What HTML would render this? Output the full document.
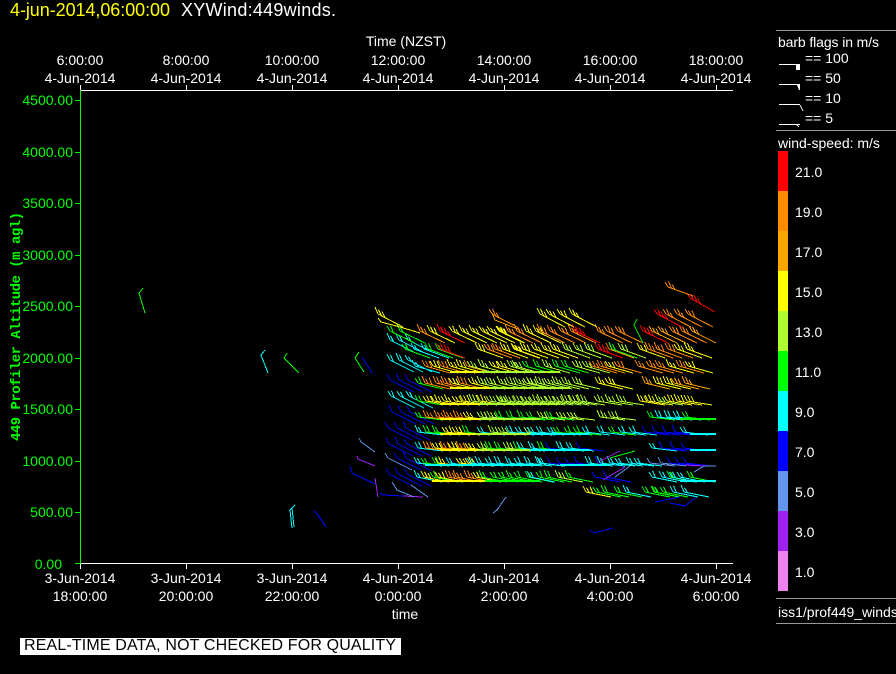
<!DOCTYPE html>
<html>
<head>
<meta charset="utf-8">
<style>
html,body{margin:0;padding:0;background:#000;width:896px;height:674px;overflow:hidden}
svg{display:block}
text{font-family:"Liberation Sans",sans-serif;font-size:14px;fill:#fff}
.g text,text.g{fill:#0f0}
</style>
</head>
<body>
<svg id="s" width="896" height="674" viewBox="0 0 896 674" xmlns="http://www.w3.org/2000/svg">
<rect width="896" height="674" fill="#000"/>
<text x="10" y="16" style="font-size:18px;fill:#ff0" textLength="160">4-jun-2014,06:00:00</text>
<text x="181" y="16" style="font-size:18px" textLength="155">XYWind:449winds.</text>

<text x="406" y="46" text-anchor="middle">Time (NZST)</text>
<g text-anchor="middle">
<text x="80" y="65">6:00:00</text><text x="80" y="83">4-Jun-2014</text>
<text x="186" y="65">8:00:00</text><text x="186" y="83">4-Jun-2014</text>
<text x="292" y="65">10:00:00</text><text x="292" y="83">4-Jun-2014</text>
<text x="398" y="65">12:00:00</text><text x="398" y="83">4-Jun-2014</text>
<text x="504" y="65">14:00:00</text><text x="504" y="83">4-Jun-2014</text>
<text x="610" y="65">16:00:00</text><text x="610" y="83">4-Jun-2014</text>
<text x="716" y="65">18:00:00</text><text x="716" y="83">4-Jun-2014</text>
<text x="80" y="583">3-Jun-2014</text><text x="80" y="601">18:00:00</text>
<text x="186" y="583">3-Jun-2014</text><text x="186" y="601">20:00:00</text>
<text x="292" y="583">3-Jun-2014</text><text x="292" y="601">22:00:00</text>
<text x="398" y="583">4-Jun-2014</text><text x="398" y="601">0:00:00</text>
<text x="504" y="583">4-Jun-2014</text><text x="504" y="601">2:00:00</text>
<text x="610" y="583">4-Jun-2014</text><text x="610" y="601">4:00:00</text>
<text x="716" y="583">4-Jun-2014</text><text x="716" y="601">6:00:00</text>
<text x="405" y="619">time</text>
</g>

<g shape-rendering="crispEdges" stroke="#fff" fill="none">
<path d="M80 90.5H733M80 563.5H733"/>
<path d="M80.5 85V90M186.5 85V90M292.5 85V90M398.5 85V90M504.5 85V90M610.5 85V90M716.5 85V90"/>
<path d="M80.5 564V569M186.5 564V569M292.5 564V569M398.5 564V569M504.5 564V569M610.5 564V569M716.5 564V569"/>
</g>
<g shape-rendering="crispEdges" stroke="#0f0" fill="none">
<path d="M80.5 90V564"/>
<path d="M75 100.5H80M75 152.5H80M75 203.5H80M75 255.5H80M75 306.5H80M75 358.5H80M75 409.5H80M75 461.5H80M75 512.5H80M75 563.5H80"/>
</g>
<g class="g" text-anchor="end">
<text x="73" y="105">4500.00</text>
<text x="73" y="157">4000.00</text>
<text x="73" y="208">3500.00</text>
<text x="73" y="260">3000.00</text>
<text x="73" y="311">2500.00</text>
<text x="73" y="363">2000.00</text>
<text x="73" y="414">1500.00</text>
<text x="73" y="466">1000.00</text>
<text x="73" y="517">500.00</text>
<text x="62" y="569">0.00</text>
</g>
<text class="g" transform="translate(20,441) rotate(-90)" style="font-family:'Liberation Mono',monospace;font-size:14px;font-weight:bold" textLength="229">449 Profiler Altitude (m agl)</text>

<g id="b" shape-rendering="crispEdges" fill="none" stroke-width="1"></g>

<!-- legend -->
<g shape-rendering="crispEdges" stroke="#999" fill="none">
<path d="M776 30.5H896M776 130.5H896M776 598.5H896M776 623.5H896"/>
</g>
<text x="778" y="47" textLength="101">barb flags in m/s</text>
<text x="805" y="63">== 100</text>
<text x="805" y="83">== 50</text>
<text x="805" y="103">== 10</text>
<text x="805" y="123">== 5</text>
<g shape-rendering="crispEdges" stroke="#fff" fill="none">
<path d="M779 64.5H800M779 84.5H800M779 104.5H800M779 124.5H800"/>
<path d="M800 105L803 111M797 125L799 127"/>
</g>
<g fill="#fff" shape-rendering="crispEdges"><rect x="796" y="64" width="4" height="6"/><path d="M797 85H800V90H799Z"/></g>
<text x="778" y="148">wind-speed: m/s</text>
<g shape-rendering="crispEdges">
<rect x="778" y="151" width="10" height="40" fill="#f00"/>
<rect x="778" y="191" width="10" height="40" fill="#ff8c00"/>
<rect x="778" y="231" width="10" height="40" fill="#ffa500"/>
<rect x="778" y="271" width="10" height="40" fill="#ff0"/>
<rect x="778" y="311" width="10" height="40" fill="#adff2f"/>
<rect x="778" y="351" width="10" height="40" fill="#0f0"/>
<rect x="778" y="391" width="10" height="40" fill="#0ff"/>
<rect x="778" y="431" width="10" height="40" fill="#00f"/>
<rect x="778" y="471" width="10" height="40" fill="#6495ed"/>
<rect x="778" y="511" width="10" height="40" fill="#a020f0"/>
<rect x="778" y="551" width="10" height="40" fill="#ee82ee"/>
</g>
<text x="795" y="177">21.0</text>
<text x="795" y="217">19.0</text>
<text x="795" y="257">17.0</text>
<text x="795" y="297">15.0</text>
<text x="795" y="337">13.0</text>
<text x="795" y="377">11.0</text>
<text x="795" y="417">9.0</text>
<text x="795" y="457">7.0</text>
<text x="795" y="497">5.0</text>
<text x="795" y="537">3.0</text>
<text x="795" y="577">1.0</text>
<text x="778" y="617">iss1/prof449_winds</text>

<!-- banner -->
<rect x="20" y="638" width="381" height="17" fill="#fff" shape-rendering="crispEdges"/>
<svg x="20" y="638" width="381" height="17" viewBox="20 638 381 17">
<text x="24" y="650" style="font-size:16px;fill:#000" textLength="372">REAL-TIME DATA, NOT CHECKED FOR QUALITY</text>
</svg>
</svg>
<script>
(function(){
var c={R:'#f00',O:'#ff8c00',A:'#ffa500',Y:'#ff0',L:'#adff2f',G:'#0f0',C:'#0ff',B:'#00f',F:'#6495ed',P:'#a020f0',V:'#ee82ee'};
var num={R:4,O:3,A:3,Y:3,L:3,G:2,C:2,B:1,F:1,P:1,V:1};
var g=document.getElementById('b'),NS='http://www.w3.org/2000/svg';
function line(d,col){var p=document.createElementNS(NS,'path');p.setAttribute('d',d);p.setAttribute('stroke',col);g.appendChild(p);}
function h(a,b){return Math.abs((a*7919+b*104729)^(a*31))%97;}
function barb(x,y,L,dy,k){
  var ty=y-dy,d='M'+x+' '+ty+'L'+(x+L)+' '+y,n=num[k],s=dy/L;
  for(var i=0;i<n;i++){var px=x+i*3.5,py=ty+s*i*3.5,bh=5+h(x+i,y)%3;
    d+='M'+px.toFixed(1)+' '+py.toFixed(1)+'l-3 -'+bh;}
  line(d,c[k]);
}
/* blue/cyan wedge at the left of the main block */
var W=[[352,'C'],[372,'C'],[392,'BC'],[408,'BC'],[424,'B'],[440,'B'],[456,'B'],[470,'FB'],[486,'B']];
W.forEach(function(r){
  for(var x=388+(r[0]%5);x<412;x+=9){var k=r[1][h(x,r[0])%r[1].length];barb(x,r[0],24,12,k);}
});
/* rows: head y, staff drop, tail segments */
var R=[
[497,5,[[586,592,'YG'],[596,606,'G'],[617,632,'CG'],[645,655,'G'],[655,690,'GC']]],
[482,5,[[417,424,'C'],[424,438,'GY'],[438,478,'YYO'],[482,530,'G'],[530,552,'GC'],[558,575,'LG'],[595,612,'GB'],[652,672,'CG'],[672,692,'CGL']]],
[466,3,[[417,424,'BC'],[424,438,'CG'],[438,470,'CY'],[470,540,'C'],[540,600,'CB'],[600,640,'C'],[650,692,'BF']]],
[451,3,[[418,426,'C'],[426,474,'YYO'],[480,520,'LG'],[520,548,'GC'],[548,580,'CB'],[652,692,'CB']]],
[435,3,[[418,426,'C'],[426,470,'YYG'],[480,530,'LC'],[530,556,'GC'],[556,590,'CG'],[600,640,'GC'],[645,692,'BC']]],
[420,3,[[418,426,'CG'],[426,472,'YYO'],[480,540,'LG'],[540,575,'GL'],[600,612,'L'],[650,692,'GC']]],
[405,4,[[418,426,'G'],[426,472,'YYO'],[472,500,'LY'],[500,580,'L'],[597,622,'YL'],[640,692,'YL']]],
[389,6,[[418,425,'G'],[425,475,'YYO'],[480,530,'L'],[530,580,'L'],[598,612,'Y'],[645,692,'YA']]],
[373,7,[[415,425,'GC'],[425,470,'YOY'],[470,515,'YL'],[515,590,'LG'],[592,620,'OY'],[638,692,'YO']]],
[358,9,[[405,425,'CG'],[428,438,'G'],[440,444,'R'],[478,515,'OY'],[515,560,'Y'],[565,590,'YL'],[598,612,'OR'],[612,628,'LG'],[640,692,'YO']]],
[343,12,[[390,405,'G'],[420,438,'YYO'],[440,446,'R'],[452,500,'YYO'],[500,540,'YO'],[540,572,'OO'],[575,582,'R'],[598,618,'O'],[643,650,'R'],[652,692,'OA']]],
[327,13,[[378,378,'Y'],[492,492,'O'],[540,568,'OY'],[572,575,'Y'],[657,664,'R'],[666,692,'O']]],
[312,14,[[690,696,'R']]],
[296,9,[[668,668,'O']]]
];
R.forEach(function(r){
  r[2].forEach(function(s){
    var x=s[0];
    do{var k=s[2][h(x,r[0])%s[2].length];barb(x,r[0],Math.min(25,716-x),r[1],k);x+=8+h(x,r[0])%4;}while(x<=s[1]);
  });
});
/* thick converged bands */
var T=[
[482,432,485,'Y'],[482,485,540,'G'],[482,680,716,'C'],
[466,425,540,'C'],[466,560,610,'C'],
[451,440,478,'Y'],[451,478,530,'L'],[451,530,590,'C'],[451,690,716,'C'],
[435,440,475,'Y'],[435,475,530,'L'],[435,530,590,'C'],[435,690,716,'C'],
[420,440,480,'Y'],[420,480,540,'L'],[420,680,716,'G'],
[405,440,480,'Y'],[405,480,560,'L'],
[389,450,490,'Y'],[389,490,570,'L'],
[373,450,480,'Y'],[373,480,560,'L']
];
T.forEach(function(t){line('M'+t[1]+' '+(t[0]-.5)+'H'+t[2]+'M'+t[1]+' '+(t[0]-1.5)+'H'+t[2],c[t[3]]);});
/* isolated barbs */
var I=[
['#0f0','M143 288L139 293L145 313'],
['#0ff','M265 350L261 355L268 373'],
['#0f0','M287 353L284 358L299 373'],
['#0f0','M359 352L355 358L364 372'],
['#00f','M362 357L372 373'],
['#0ff','M295 505L290 510L292 528M292 508L294 527'],
['#00f','M314 511L318 515L326 527'],
['#00f','M590 530L594 533L613 528'],
['#6495ed','M493 513L497 510L506 497'],
['#6495ed','M359 438L361 442L375 452'],
['#a020f0','M357 456L358 459L375 466'],
['#00f','M350 466L352 473L375 484'],
['#a020f0','M375 478L378 497'],
['#00f','M380 493L383 495L423 497'],
['#a020f0','M403 496L423 497'],
['#6495ed','M392 482L397 490L414 497M411 485L428 497'],
['#a020f0','M600 461L620 451M603 480L625 467'],
['#0f0','M610 458L635 451'],
['#6495ed','M615 477L630 466'],
['#00f','M670 503L685 506L695 498'],
['#00f','M655 502L680 497'],
['#0f0','M637 319L634 325L643 343'],
['#a020f0','M685 465L705 466'],
['#6495ed','M694 472L704 466L716 466'],
['#ffa500','M492 313L495 320L520 330'],
['#ff0','M378 318L381 322L400 327L420 333']
];
I.forEach(function(a){line(a[1],a[0]);});
})();
</script>
</body>
</html>
